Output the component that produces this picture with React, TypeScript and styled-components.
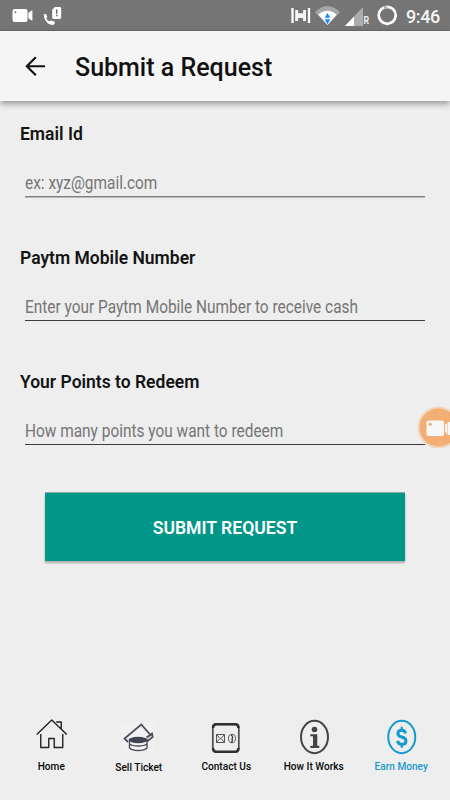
import React from "react";
import styled, { createGlobalStyle } from "styled-components";

const GlobalStyle = createGlobalStyle`
  * { box-sizing: border-box; }
  body { margin: 0; background: #eeeeee; font-family: Roboto, "Liberation Sans", sans-serif; }
  svg { display: block; flex: none; }
`;

const Screen = styled.div`
  position: relative;
  display: flex;
  flex-direction: column;
  width: 450px;
  height: 800px;
  overflow: hidden;
  background: #eeeeee;
`;

const StatusBar = styled.header`
  display: flex;
  justify-content: space-between;
  height: 31px;
  flex: none;
  background: #757575;
  border-bottom: 1px solid #6b6b6b;
  color: #fff;
`;

const StatusRight = styled.div`
  display: flex;
`;

const Clock = styled.time`
  width: 44px;
  padding-top: 6px;
  font-size: 18px;
  line-height: 22px;
  font-weight: 500;
  letter-spacing: -0.4px;
  color: #f5f5f5;
`;

const AppBar = styled.div`
  display: flex;
  align-items: center;
  height: 70px;
  flex: none;
  padding: 2px 0 0 24px;
  gap: 29px;
  background: #f5f5f5;
  box-shadow: 0 3px 6px rgba(0, 0, 0, 0.36);
`;

const Title = styled.h1`
  margin: 0;
  padding-top: 2px;
  font-size: 25px;
  line-height: 30px;
  font-weight: 500;
  color: #111;
  white-space: nowrap;
`;

const Form = styled.form`
  display: flex;
  flex-direction: column;
  flex: 1;
  padding-top: 22px;
`;

const Field = styled.label`
  display: block;
  height: 124px;
  padding: 0 25px 0 20px;
`;

const Label = styled.span`
  display: block;
  height: 22px;
  font-size: 17.5px;
  line-height: 23px;
  font-weight: 600;
  color: #141414;
`;

const InputLine = styled.span<{ $soft?: boolean }>`
  display: block;
  height: 30px;
  margin: 22px 0 0 5px;
  border-bottom: 1px solid ${(p) => (p.$soft ? "#808080" : "#3c3c3c")};
  box-shadow: 0 1px 0 ${(p) => (p.$soft ? "#b8b8b8" : "transparent")};
`;

const Hint = styled.span`
  display: inline-block;
  font-size: 17.5px;
  line-height: 33px;
  color: #757575;
  white-space: nowrap;
  transform: scaleX(0.881);
  transform-origin: 0 50%;
`;

const SubmitButton = styled.button`
  height: 68px;
  margin: -2px 45px 0;
  padding: 1px 0 0;
  border: 0;
  background: #009688;
  box-shadow: 0 2px 2px rgba(0, 0, 0, 0.28), 0 -1px 0 rgba(0, 70, 60, 0.4);
  color: #fff;
  font-family: inherit;
  font-size: 17.6px;
  font-weight: 600;
`;

const Nav = styled.nav`
  display: grid;
  grid-template-columns: repeat(5, 87.5px);
  height: 90px;
  padding-left: 7.5px;
  flex: none;
`;

const NavItem = styled.a<{ $active?: boolean; $low?: boolean }>`
  display: flex;
  flex-direction: column;
  align-items: center;
  padding-top: ${(p) => (p.$low ? 8 : 7)}px;
  font-size: 10.1px;
  line-height: 14px;
  font-weight: 500;
  white-space: nowrap;
  color: ${(p) => (p.$active ? "#1b99cc" : "#080808")};
`;

const FloatingRecorder = styled.div`
  position: absolute;
  top: 406px;
  left: 417px;
`;

const NotificationIcons = () => (
  <svg width="70" height="30" viewBox="0 0 70 30">
    <rect x="12.5" y="9" width="15" height="13" rx="2" fill="#fff" />
    <path d="M28.3 13.3 31 10.7h1v9.6h-1l-2.7-2.6z" fill="#fff" />
    <path d="M32.5 10.5v10" stroke="#bbb" strokeWidth=".8" />
    <circle cx="15.4" cy="12.2" r="1" fill="#757575" />
    <path d="M43.7 14.6q1.4-.9 2.6-.3.8 1.3 1 2.9l-1 1.4q1 2 3 2.7l1.4-.9q2.1.3 4 1.4.5 2.5-1.9 3.100-4 .2-6.600-3.300-2.600-3.200-2.500-7z" fill="#fff" />
    <path d="M54.800 7h5.100q1.300 0 1.300 1.300v9.300q0 1.300-1.300 1.300h-6.400q-1.300 0-1.300-1.300V9.700z" fill="#fff" />
    <path d="M56.700 9.500v4.200M56.700 14.800v1.400" stroke="#686868" strokeWidth="1.500" />
  </svg>
);

const SignalIcons = () => (
  <svg width="115" height="30" viewBox="291 0 115 30">
    <path d="M292.500 8v15M309 8v15" stroke="#fff" strokeWidth="2.300" />
    <path d="M295.200 10h2.900v3.200h5V10h2.900v11h-2.900v-3h-5v3h-2.900z" fill="#f4f4f4" />
    <path d="M315 12.200Q327.500 0 340 12.200L327.500 25z" fill="#a6a6a6" />
    <path d="M318.300 14.600q9.200-7.600 18.400 0L327.500 25z" fill="#fff" />
    <path d="M324.700 17.800 327.500 13l2.800 4.800zM324.700 19.300h5.600l-2.800 5z" fill="#1687f5" />
    <path d="M363 7v19h-18z" fill="#adadad" />
    <path d="M354 16.500V26h-9z" fill="#fff" />
    <text x="363.400" y="24" fontSize="10" fontWeight="600" fill="#f3f3f3" textLength="5.600" lengthAdjust="spacingAndGlyphs">R</text>
    <circle cx="387.200" cy="15.300" r="8.500" fill="none" stroke="#fff" strokeWidth="2.700" />
    <path d="M383.800 7.500q1.700-.8 3.500-.7" stroke="#b2b2b2" strokeWidth="2.800" />
  </svg>
);

const BackIcon = () => (
  <svg width="22" height="22" viewBox="0 0 22 22">
    <path d="M11.800 1.200 2.800 10.200l9 9M3 10.200h18" fill="none" stroke="#111" strokeWidth="2.100" />
  </svg>
);

const HomeIcon = () => (
  <svg width="36" height="43" viewBox="-0.750 0 36 43" fill="none" stroke="#222" strokeWidth="1.400">
    <path d="M3 17.500 18 3l15 14.500M7 17v13.500h8v-9h5.500v9H29V17M22.500 5h5v7" strokeLinejoin="round" />
  </svg>
);

const TicketIcon = () => (
  <svg width="36" height="43" viewBox="0 0 36 43">
    <path d="M.5 5h33v28H.500z" fill="#f1f1f1" />
    <path d="M7 24 3.500 20.500 20.300 6.500 29.500 17l-3 2M25.500 19.500l5.500-4 .7 3.500-5.700 4.500" fill="none" stroke="#4c4e5c" strokeWidth="1.800" />
    <path d="M8.500 21.500v8.500q2.500 2.500 8.700 2.500t8.800-2.500v-8.500z" fill="#f5f5f5" stroke="#4c4e5c" strokeWidth="1.400" />
    <ellipse cx="17.200" cy="22" rx="9.300" ry="3.300" fill="#424453" />
    <path d="M8.500 26q2.500 2 8.700 2t8.800-2" fill="none" stroke="#4c4e5c" strokeWidth="1.400" />
  </svg>
);

const ContactIcon = () => (
  <svg width="36" height="43" viewBox="0 0 36 43">
    <rect x="4.800" y="7.300" width="26" height="27.500" rx="4" fill="#eee" stroke="#4c4c4c" strokeWidth="1.700" />
    <path d="M5 11q0-3.800 3-3.800h19.500q3 0 3 3.800M5 31q0 3.800 3 3.800h19.500q3 0 3-3.800" fill="none" stroke="#303030" strokeWidth="2.500" />
    <g fill="none" stroke="#555" strokeWidth="1">
      <path d="M8.500 17.500h8v8h-8zM8.500 17.500l4 4.500 4-4.500M8.500 25.500l3-3.500M16.500 25.500l-3-3.500" />
      <ellipse cx="24" cy="21.500" rx="3.500" ry="4.300" />
    </g>
    <path d="m22.800 18.300 1.300.4.500 2-.5.600v1l.4 1-.7 1.800h-1" fill="none" stroke="#333" strokeWidth="1.200" />
  </svg>
);

const InfoIcon = () => (
  <svg width="36" height="43" viewBox="0 0 36 43">
    <ellipse cx="18.500" cy="20" rx="13.500" ry="16.200" fill="none" stroke="#444" strokeWidth="2" />
    <circle cx="18.500" cy="12.500" r="2.800" fill="#444" />
    <path d="M14.300 17.300h7v11.400h2v2.200h-9v-2.200h2.700v-9.400h-2.700z" fill="#444" />
  </svg>
);

const MoneyIcon = () => (
  <svg width="36" height="43" viewBox="-0.250 0 36 43">
    <ellipse cx="18.500" cy="20" rx="13.500" ry="16.200" fill="none" stroke="#159bce" strokeWidth="2" />
    <path d="M22.300 16.500q-.7-3.200-3.800-3.200-3.800 0-3.800 3.200 0 2.600 3.800 3.500 4.200 1 4.200 3.900 0 3.400-4.200 3.400-3.500 0-4.200-3.400" fill="none" stroke="#159bce" strokeWidth="3" />
    <path d="M18.500 9.800v4M18.500 27v3.800" stroke="#159bce" strokeWidth="2.200" />
  </svg>
);

const RecorderIcon = () => (
  <svg width="33" height="42" viewBox="417 406 33 42">
    <circle cx="438.500" cy="427.500" r="21" fill="#efd6bd" />
    <circle cx="438.500" cy="427.500" r="19" fill="#f3af73" />
    <rect x="426.500" y="420.500" width="17.500" height="15.500" rx="1.700" fill="#f7f7f7" />
    <path d="m445 425 3-3h3v13h-3l-3-3z" fill="#f7f7f7" />
    <path d="M447.500 422v13" stroke="#f3c499" strokeWidth=".8" />
    <circle cx="430.300" cy="424.200" r="1.500" fill="#efa769" />
  </svg>
);

const fields = [
  { label: "Email Id", hint: "ex: xyz@gmail.com", soft: true },
  { label: "Paytm Mobile Number", hint: "Enter your Paytm Mobile Number to receive cash" },
  { label: "Your Points to Redeem", hint: "How many points you want to redeem" },
];

export default function App() {
  return (
    <>
      <GlobalStyle />
      <Screen>
        <StatusBar>
          <NotificationIcons />
          <StatusRight>
            <SignalIcons />
            <Clock>9:46</Clock>
          </StatusRight>
        </StatusBar>
        <AppBar>
          <BackIcon />
          <Title>Submit a Request</Title>
        </AppBar>
        <Form>
          {fields.map((f) => (
            <Field key={f.label}>
              <Label>{f.label}</Label>
              <InputLine $soft={f.soft}>
                <Hint>{f.hint}</Hint>
              </InputLine>
            </Field>
          ))}
          <SubmitButton type="button">SUBMIT REQUEST</SubmitButton>
        </Form>
        <Nav>
          <NavItem><HomeIcon />Home</NavItem>
          <NavItem $low><TicketIcon />Sell Ticket</NavItem>
          <NavItem><ContactIcon />Contact Us</NavItem>
          <NavItem><InfoIcon />How It Works</NavItem>
          <NavItem $active><MoneyIcon />Earn Money</NavItem>
        </Nav>
        <FloatingRecorder><RecorderIcon /></FloatingRecorder>
      </Screen>
    </>
  );
}
